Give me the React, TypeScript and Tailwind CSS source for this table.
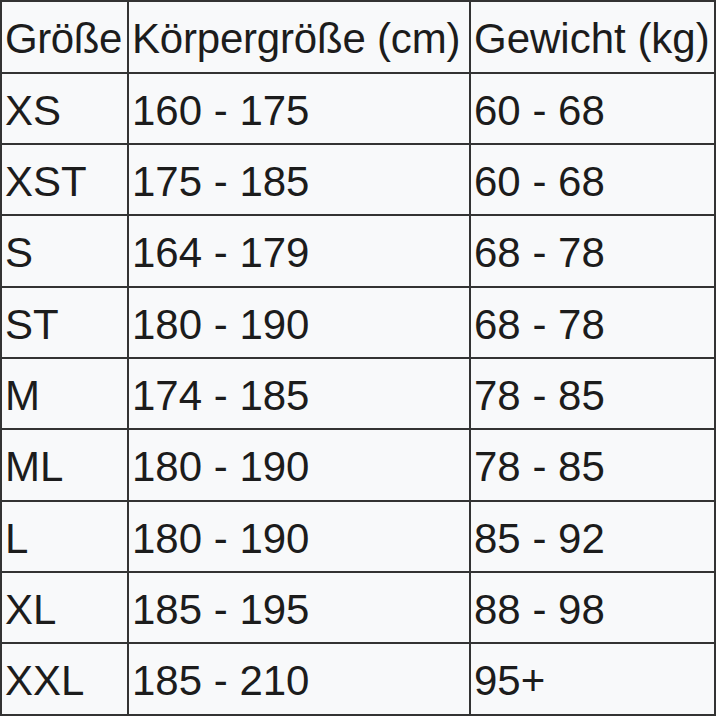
const rows: [string, string, string][] = [
  ["XS", "160 - 175", "60 - 68"],
  ["XST", "175 - 185", "60 - 68"],
  ["S", "164 - 179", "68 - 78"],
  ["ST", "180 - 190", "68 - 78"],
  ["M", "174 - 185", "78 - 85"],
  ["ML", "180 - 190", "78 - 85"],
  ["L", "180 - 190", "85 - 92"],
  ["XL", "185 - 195", "88 - 98"],
  ["XXL", "185 - 210", "95+"],
];

const cell = "border-2 border-[#333] px-[3px] pt-[4px] text-left align-middle font-normal";

export default function App() {
  return (
    <div className="h-[716px] w-[720px] bg-white font-['Liberation_Sans',Arial,sans-serif] text-[42px] leading-none text-[#1c1c1c]">
      <table className="table-fixed border-collapse bg-[#f8f9fa]">
        <colgroup>
          <col className="w-[127px]" />
          <col className="w-[342px]" />
          <col className="w-[245px]" />
        </colgroup>
        <thead>
          <tr className="h-[72px]">
            <th className={`${cell} whitespace-nowrap tracking-[-0.4px]`}>Größe</th>
            <th className={`${cell} whitespace-nowrap tracking-[-0.2px]`}>Körpergröße (cm)</th>
            <th className={`${cell} whitespace-nowrap`}>Gewicht (kg)</th>
          </tr>
        </thead>
        <tbody>
          {rows.map(([size, height, weight], i) => (
            <tr key={size} className={i % 3 === 2 ? "h-[72px]" : "h-[71px]"}>
              <td className={cell}>{size}</td>
              <td className={cell}>{height}</td>
              <td className={cell}>{weight}</td>
            </tr>
          ))}
        </tbody>
      </table>
    </div>
  );
}
